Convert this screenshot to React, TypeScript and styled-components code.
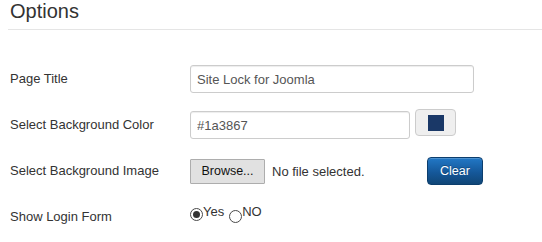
import * as React from 'react';
import styled, { createGlobalStyle } from 'styled-components';

const GlobalStyle = createGlobalStyle`
  html, body {
    margin: 0;
    padding: 0;
    background: #fff;
  }
  body {
    font-family: "Liberation Sans", Arial, sans-serif;
    font-size: 13px;
    color: #333;
  }
`;

const Page = styled.div`
  width: 542px;
  height: 242px;
  padding-left: 8px;
  box-sizing: border-box;
  overflow: hidden;
`;

const Title = styled.h2`
  margin: 0 0 0 2px;
  font-size: 20px;
  line-height: 22px;
  font-weight: normal;
  color: #333;
`;

const Divider = styled.hr`
  margin: 7px 0 26px;
  border: 0;
  border-top: 1px solid #e5e5e5;
  height: 0;
`;

const Row = styled.div`
  display: grid;
  grid-template-columns: 182px 1fr;
  align-items: center;
  height: 46px;
`;

const Label = styled.label`
  padding-left: 2px;
  font-size: 13px;
  line-height: 18px;
  color: #333;
`;

const Controls = styled.div`
  display: flex;
  align-items: center;
`;

const TextInput = styled.input<{ $width: number }>`
  width: ${p => p.$width}px;
  height: 28px;
  box-sizing: border-box;
  padding: 0 6px;
  border: 1px solid #ccc;
  border-radius: 3px;
  box-shadow: inset 0 1px 1px rgba(0, 0, 0, 0.075);
  font-family: "Liberation Sans", Arial, sans-serif;
  font-size: 13px;
  color: #555;
  background: #fff;
  outline: none;
`;

const SwatchButton = styled.button`
  width: 41px;
  height: 27px;
  margin: 0 0 5px 5px;
  padding: 0;
  display: flex;
  align-items: center;
  justify-content: center;
  box-sizing: border-box;
  border: 1px solid #ccc;
  border-radius: 4px;
  background: #efefef;
`;

const Swatch = styled.span<{ $color: string }>`
  width: 16px;
  height: 16px;
  background: ${p => p.$color};
`;

const FileField = styled.div`
  width: 237px;
  display: flex;
  align-items: center;
  gap: 7px;
`;

const BrowseButton = styled.button`
  width: 75px;
  height: 25px;
  padding: 0;
  box-sizing: border-box;
  border: 1px solid #adadad;
  border-radius: 1px;
  background: #e1e1e1;
  font-family: "Liberation Sans", Arial, sans-serif;
  font-size: 12.5px;
  color: #111;
`;

const FileStatus = styled.span`
  font-size: 13px;
  color: #333;
`;

const ClearButton = styled.button`
  width: 56px;
  height: 28px;
  padding: 0;
  box-sizing: border-box;
  border: 1px solid #0c3e6d;
  border-radius: 4px;
  background: linear-gradient(to bottom, #2278c6 0%, #15589a 55%, #104677 100%);
  box-shadow: inset 0 1px 0 rgba(255, 255, 255, 0.2);
  font-family: "Liberation Sans", Arial, sans-serif;
  font-size: 12.5px;
  color: #fff;
  text-shadow: 0 -1px 0 rgba(0, 0, 0, 0.25);
`;

const RadioGroup = styled.div`
  display: flex;
  align-items: flex-start;
  margin-bottom: 7px;
`;

const RadioOption = styled.label`
  display: inline-flex;
  align-items: flex-start;
  margin-right: 5px;
`;

const RadioCircle = styled.span<{ $checked: boolean; $offset: number }>`
  width: 13px;
  height: 13px;
  margin-top: ${p => p.$offset}px;
  box-sizing: border-box;
  border: 1px solid #4a4a4a;
  border-radius: 50%;
  background: #fff;
  display: flex;
  align-items: center;
  justify-content: center;
  &::after {
    content: '';
    width: 7px;
    height: 7px;
    border-radius: 50%;
    background: #333;
    display: ${p => (p.$checked ? 'block' : 'none')};
  }
`;

const RadioText = styled.span`
  font-size: 13px;
  line-height: 15px;
  color: #333;
`;

export default function App() {
  return (
    <Page>
      <GlobalStyle />
      <Title>Options</Title>
      <Divider />
      <Row>
        <Label>Page Title</Label>
        <Controls>
          <TextInput $width={284} defaultValue="Site Lock for Joomla" />
        </Controls>
      </Row>
      <Row>
        <Label>Select Background Color</Label>
        <Controls>
          <TextInput $width={220} defaultValue="#1a3867" />
          <SwatchButton>
            <Swatch $color="#1a3867" />
          </SwatchButton>
        </Controls>
      </Row>
      <Row>
        <Label>Select Background Image</Label>
        <Controls>
          <FileField>
            <BrowseButton>Browse...</BrowseButton>
            <FileStatus>No file selected.</FileStatus>
          </FileField>
          <ClearButton>Clear</ClearButton>
        </Controls>
      </Row>
      <Row>
        <Label>Show Login Form</Label>
        <Controls>
          <RadioGroup>
            <RadioOption>
              <RadioCircle $checked $offset={4} />
              <RadioText>Yes</RadioText>
            </RadioOption>
            <RadioOption>
              <RadioCircle $checked={false} $offset={6} />
              <RadioText>NO</RadioText>
            </RadioOption>
          </RadioGroup>
        </Controls>
      </Row>
    </Page>
  );
}
